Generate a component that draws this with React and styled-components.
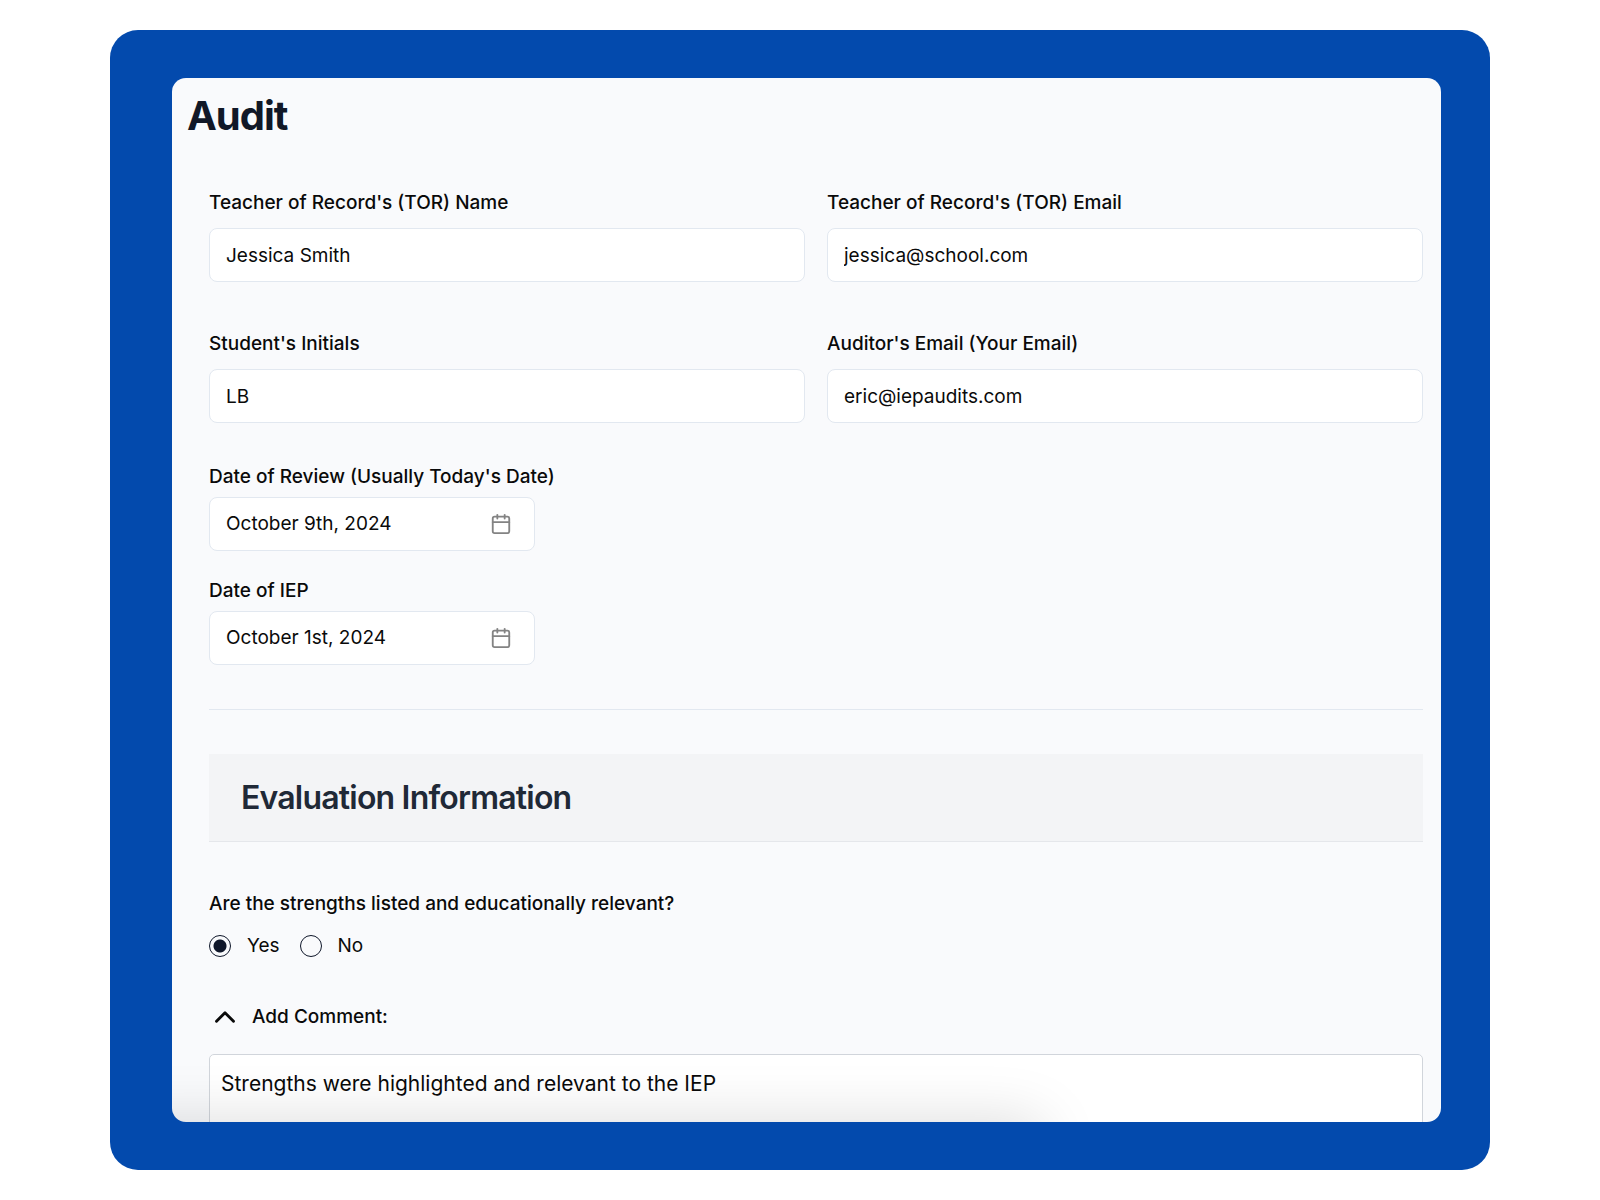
import React from "react";
import styled, { createGlobalStyle } from "styled-components";
import { Calendar, ChevronUp } from "lucide-react";

const GlobalStyle = createGlobalStyle`
  *, *::before, *::after { box-sizing: border-box; }
  body {
    margin: 0;
    background: #fff;
    color: #0a0a0a;
    font-family: Inter, "Liberation Sans", sans-serif;
    -webkit-font-smoothing: antialiased;
  }
  button, input, textarea { font: inherit; color: inherit; }
`;

const Page = styled.div`
  display: flex;
  height: 100vh;
  padding: 30px 110px;
`;

const Frame = styled.main`
  flex: 1;
  display: flex;
  padding: 48px 49px 48px 62px;
  border-radius: 28px;
  background: #034aad;
`;

const Card = styled.section`
  position: relative;
  flex: 1;
  padding: 15px 18px 0 15px;
  border-radius: 14px;
  background: #f9fafc;
  overflow: hidden;

  &::after {
    content: "";
    position: absolute;
    top: 100%;
    left: -60px;
    right: 400px;
    height: 60px;
    box-shadow: 0 0 60px rgba(0, 0, 0, 0.15);
    pointer-events: none;
  }
`;

const Title = styled.h1`
  margin: 0;
  font-size: 40px;
  line-height: 46px;
  font-weight: 700;
  letter-spacing: -0.025em;
  color: #111827;
`;

const Form = styled.form`
  padding: 50px 0 0 22px;
`;

const FieldGrid = styled.div`
  display: grid;
  grid-template-columns: 1fr 1fr;
  gap: 48px 22px;
`;

const Field = styled.div`
  display: flex;
  flex-direction: column;
  align-items: stretch;
  gap: ${(p) => p.$gap}px;
`;

const Label = styled.label`
  font-size: 19px;
  line-height: 28px;
  font-weight: 500;
`;

const TextInput = styled.input`
  width: 100%;
  height: 54px;
  padding: 0 16px;
  border: 1px solid #e2e8f0;
  border-radius: 8px;
  background: #fff;
  font-size: 19px;
  line-height: 28px;
`;

const Dates = styled.div`
  display: flex;
  flex-direction: column;
  gap: 26px;
  padding: 40px 0 44px;
  border-bottom: 1px solid #e2e8f0;
`;

const DateButton = styled.button`
  display: flex;
  align-items: center;
  justify-content: space-between;
  width: 326px;
  height: 54px;
  padding: 0 22px 0 16px;
  border: 1px solid #e2e8f0;
  border-radius: 8px;
  background: #fff;
  font-size: 19px;
  line-height: 28px;

  svg { opacity: 0.5; }
`;

const SectionHeader = styled.header`
  margin-top: 44px;
  padding: 22px 32px;
  border-bottom: 1px solid #e5e7eb;
  background: #f3f4f6;
`;

const SectionTitle = styled.h2`
  margin: 0;
  font-size: 32px;
  line-height: 43px;
  font-weight: 600;
  letter-spacing: -0.025em;
  color: #1f2937;
`;

const Question = styled.fieldset`
  margin: 48px 0 0;
  padding: 0;
  border: 0;
`;

const Legend = styled.legend`
  padding: 0;
  font-size: 19px;
  line-height: 28px;
  font-weight: 500;
`;

const Options = styled.div`
  display: flex;
  gap: 20px;
  padding-top: 14px;
`;

const Option = styled.label`
  display: flex;
  align-items: center;
  gap: 16px;
  font-size: 19px;
  line-height: 28px;
`;

const Radio = styled.input`
  appearance: none;
  width: 22px;
  height: 22px;
  margin: 0;
  border: 1px solid #0f172a;
  border-radius: 50%;

  &:checked {
    background: radial-gradient(circle, #0f172a 6px, transparent 7px);
  }
`;

const CommentToggle = styled.button`
  display: flex;
  align-items: center;
  gap: 11px;
  height: 32px;
  margin-top: 41px;
  padding: 0;
  border: 0;
  background: none;
  font-size: 19px;
  line-height: 28px;
  font-weight: 500;
`;

const ToggleIcon = styled.span`
  display: flex;
  justify-content: center;
  width: 32px;

  svg { flex: none; }
`;

const Comment = styled.textarea`
  display: block;
  width: 100%;
  height: 120px;
  margin-top: 21px;
  padding: 13px 11px;
  border: 1px solid #d1d5db;
  border-radius: 5px;
  background: #fff;
  font-size: 21px;
  line-height: 32px;
  resize: none;
`;

const fields = [
  { id: "tor-name", label: "Teacher of Record's (TOR) Name", value: "Jessica Smith" },
  { id: "tor-email", label: "Teacher of Record's (TOR) Email", value: "jessica@school.com" },
  { id: "initials", label: "Student's Initials", value: "LB" },
  { id: "auditor-email", label: "Auditor's Email (Your Email)", value: "eric@iepaudits.com" },
];

const dates = [
  { id: "review-date", label: "Date of Review (Usually Today's Date)", value: "October 9th, 2024" },
  { id: "iep-date", label: "Date of IEP", value: "October 1st, 2024" },
];

export default function App() {
  return (
    <>
      <GlobalStyle />
      <Page>
        <Frame>
          <Card>
            <Title>Audit</Title>
            <Form>
              <FieldGrid>
                {fields.map((f) => (
                  <Field key={f.id} $gap={11}>
                    <Label htmlFor={f.id}>{f.label}</Label>
                    <TextInput id={f.id} type="text" defaultValue={f.value} />
                  </Field>
                ))}
              </FieldGrid>
              <Dates>
                {dates.map((d) => (
                  <Field key={d.id} $gap={6}>
                    <Label htmlFor={d.id}>{d.label}</Label>
                    <DateButton id={d.id} type="button">
                      {d.value}
                      <Calendar size={22} />
                    </DateButton>
                  </Field>
                ))}
              </Dates>
              <SectionHeader>
                <SectionTitle>Evaluation Information</SectionTitle>
              </SectionHeader>
              <Question>
                <Legend>Are the strengths listed and educationally relevant?</Legend>
                <Options>
                  <Option>
                    <Radio type="radio" name="strengths" value="yes" defaultChecked />
                    Yes
                  </Option>
                  <Option>
                    <Radio type="radio" name="strengths" value="no" />
                    No
                  </Option>
                </Options>
              </Question>
              <CommentToggle type="button" aria-expanded="true" aria-controls="comment">
                <ToggleIcon>
                  <ChevronUp size={34} strokeWidth={2} />
                </ToggleIcon>
                Add Comment:
              </CommentToggle>
              <Comment
                id="comment"
                aria-label="Comment"
                defaultValue="Strengths were highlighted and relevant to the IEP"
              />
            </Form>
          </Card>
        </Frame>
      </Page>
    </>
  );
}
